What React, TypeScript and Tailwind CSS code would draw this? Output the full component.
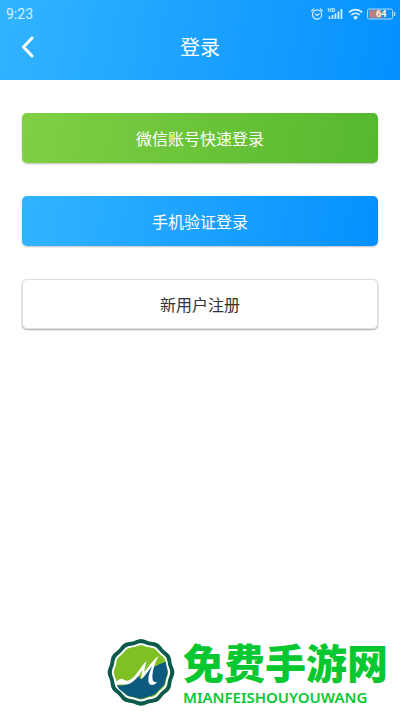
import type { ReactNode } from "react";
import clsx from "clsx";

function scallop(radius: number, depth: number) {
  const points: string[] = [];
  for (let deg = 0; deg < 360; deg += 3) {
    const a = (deg * Math.PI) / 180;
    const r = radius + depth * Math.cos(12 * a);
    points.push(`${(128 + r * Math.sin(a)).toFixed(1)} ${(126 - r * Math.cos(a)).toFixed(1)}`);
  }
  return `M${points.join("L")}Z`;
}

function StatusIcons() {
  return (
    <svg viewBox="0 0 86 14" className="h-3.5 w-[86px]" fill="none" stroke="#d8f2ff" aria-hidden="true">
      {/* alarm */}
      <circle cx="7" cy="7.5" r="4.6" strokeWidth="1.1" />
      <path d="M1.4 4 3.8 1.8M12.6 4 10.2 1.8M5 6.8 7 8.5 9.2 6.8" strokeWidth="1.1" strokeLinecap="round" />
      {/* signal */}
      <text x="17.5" y="5" fontSize="5.5" fontWeight="700" fontFamily="Roboto, sans-serif" fill="#d8f2ff" stroke="none">
        HD
      </text>
      <path d="M19.5 12V9.5M22.5 12V8M25.5 12V6.5M28.5 12V4.5M31.5 12V2" strokeWidth="1.7" />
      {/* wifi */}
      <path d="M38.8 5.4a9.5 9.5 0 0 1 13.4 0M41.2 8a6 6 0 0 1 8.6 0" strokeWidth="1.6" />
      <path d="M43 10.2a3.5 3.5 0 0 1 5 0L45.5 13Z" fill="#d8f2ff" stroke="none" />
      {/* battery */}
      <rect x="57.5" y="2" width="25" height="10" rx="1.5" strokeWidth="1" stroke="#b7d7f5" />
      <rect x="59" y="3.2" width="13" height="7.6" fill="#b9807f" stroke="none" />
      <path d="M84.5 5v4" strokeWidth="1.6" stroke="#b7d7f5" />
      <text x="66" y="10.4" fontSize="9" fontWeight="700" fontFamily="Roboto, sans-serif" fill="#fff8dc" stroke="none">
        64
      </text>
    </svg>
  );
}

function BrandMark() {
  return (
    <svg viewBox="26 26 204 201" className="h-[67px] w-[68px] shrink-0" aria-hidden="true">
      <path d={scallop(98, 2)} fill="#0b5a4c" />
      <path d={scallop(86, 1.5)} fill="#fff" />
      <path d={scallop(80, 1.5)} fill="#7fc023" />
      <path
        d="M55 163C75 170 98 160 117 133L128 147 157 105 163 112C175 104 190 98 202 94L208 126 198 163 168 193 128 206 88 196 62 176Z"
        fill="#0c5b7e"
      />
      <path
        d="M49 151C56 157 60 145 69 145 77 146 79 151 87 151 107 148 120 120 144 91L137 125C150 112 161 91 181 77 170 95 163 118 162 138 162 153 167 158 177 155 166 168 151 166 150 151 149 135 156 120 162 107 149 122 140 139 128 147L132 119C120 139 109 153 93 160 80 165 67 160 55 165Z"
        fill="#fff"
      />
    </svg>
  );
}

function LoginButton({ className, children }: { className: string; children: ReactNode }) {
  return (
    <button type="button" className={clsx("h-[50px] w-full rounded-[5px] text-base", className)}>
      {children}
    </button>
  );
}

export default function App() {
  return (
    <div className="flex min-h-screen flex-col bg-white font-['Noto_Sans_CJK_SC',sans-serif]">
      <header className="bg-linear-[100deg] from-[#32b4ff] to-[#0590ff] pb-2 text-white">
        <div className="flex h-7 items-center justify-between pr-1 pl-1.5">
          <span className="font-[Roboto,sans-serif] text-sm text-[#d8f2ff]">9:23</span>
          <StatusIcons />
        </div>
        <div className="grid h-11 grid-cols-[1fr_auto_1fr] items-center px-5 pb-1.5">
          <button type="button" aria-label="返回" className="justify-self-start">
            <svg viewBox="0 0 16 22" className="h-[22px] w-4" fill="none" stroke="currentColor" strokeWidth="3" strokeLinecap="round" strokeLinejoin="round">
              <path d="M12 2 3.5 11 12 20" />
            </svg>
          </button>
          <h1 className="text-xl">登录</h1>
        </div>
      </header>

      <main className="flex flex-col gap-[33px] px-[22px] pt-[33px]">
        <LoginButton className="bg-linear-[100deg] from-[#80d044] to-[#55b82f] text-white shadow-[0_1px_2px_rgba(0,0,0,0.25)]">
          微信账号快速登录
        </LoginButton>
        <LoginButton className="bg-linear-[100deg] from-[#32b4ff] to-[#0590ff] text-white shadow-[0_1px_2px_rgba(0,0,0,0.25)]">
          手机验证登录
        </LoginButton>
        <LoginButton className="border border-[#dedede] bg-white text-[#333] shadow-[0_1px_2px_rgba(0,0,0,0.35)]">
          新用户注册
        </LoginButton>
      </main>

      <footer className="mt-auto flex items-center justify-end gap-2 pr-3 pb-1">
        <BrandMark />
        <div className="flex flex-col gap-1 pb-0.5 text-[#08c832]">
          <p className="text-[41px] leading-[48px] font-black">免费手游网</p>
          <p className="font-['Noto_Sans',sans-serif] text-[15px] leading-4 font-semibold">MIANFEISHOUYOUWANG</p>
        </div>
      </footer>
    </div>
  );
}
